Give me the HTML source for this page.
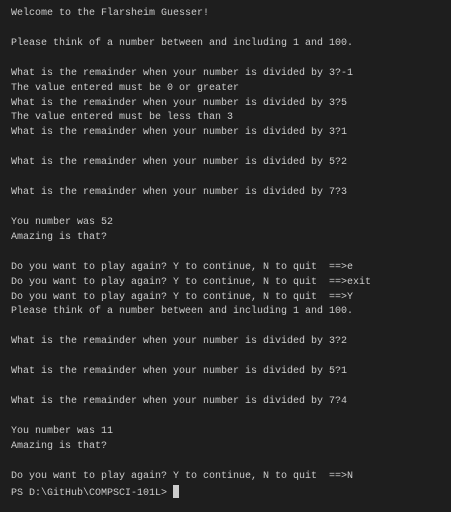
<!DOCTYPE html>
<html><head><meta charset="utf-8"><style>
html,body{margin:0;padding:0;background:#1e1e1e;width:451px;height:512px;overflow:hidden}
pre{margin:0;position:absolute;left:11px;top:7px;font-family:"Liberation Mono",monospace;font-size:10px;line-height:14.92px;color:#cccccc;white-space:pre}
.cur{display:inline-block;width:6px;height:13px;background:#cccccc;vertical-align:-3px}
</style></head><body><pre>Welcome to the Flarsheim Guesser!

Please think of a number between and including 1 and 100.

What is the remainder when your number is divided by 3?-1
The value entered must be 0 or greater
What is the remainder when your number is divided by 3?5
The value entered must be less than 3
What is the remainder when your number is divided by 3?1

What is the remainder when your number is divided by 5?2

What is the remainder when your number is divided by 7?3

You number was 52
Amazing is that?

Do you want to play again? Y to continue, N to quit  ==>e
Do you want to play again? Y to continue, N to quit  ==>exit
Do you want to play again? Y to continue, N to quit  ==>Y
Please think of a number between and including 1 and 100.

What is the remainder when your number is divided by 3?2

What is the remainder when your number is divided by 5?1

What is the remainder when your number is divided by 7?4

You number was 11
Amazing is that?

Do you want to play again? Y to continue, N to quit  ==>N
PS D:\GitHub\COMPSCI-101L&gt; <span class="cur"></span></pre></body></html>
